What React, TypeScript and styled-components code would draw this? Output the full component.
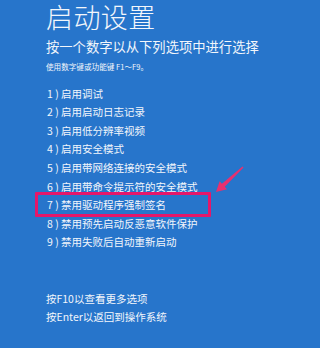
import styled, { createGlobalStyle } from 'styled-components';

const GlobalStyle = createGlobalStyle`
    html, body {
        margin: 0;
        padding: 0;
        background: #2775cb;
    }
    body {
        font-family: "Noto Sans CJK SC", "Noto Sans", sans-serif;
        color: #f2f6fb;
    }
`;

const Screen = styled.main`
    position: relative;
    width: 303px;
    height: 348px;
    overflow: hidden;
    box-sizing: border-box;
    padding: 2px 0 0 46px;
    background: #2775cb;
`;

const Title = styled.h1`
    margin: 0;
    font-size: 27px;
    font-weight: 300;
    line-height: 30px;
    letter-spacing: 0.4px;
`;

const Prompt = styled.h2`
    margin: 6px 0 0;
    font-size: 13.3px;
    font-weight: 400;
    line-height: 18px;
`;

const Hint = styled.p`
    margin: 5px 0 0;
    font-size: 7.6px;
    line-height: 12px;
`;

const OptionList = styled.ol`
    margin: 11.7px 0 0;
    padding: 0;
    list-style: none;
`;

const Option = styled.li<{ $highlighted?: boolean }>`
    position: relative;
    font-size: 10.5px;
    line-height: 18.6px;
    padding-left: 1px;

    ${p => p.$highlighted && `
        &::after {
            content: '';
            position: absolute;
            left: -11px;
            top: -4.5px;
            width: 176px;
            height: 25.5px;
            box-sizing: border-box;
            border: 3.5px solid #e5176a;
            border-radius: 1px;
        }
    `}
`;

const Footer = styled.div`
    margin-top: 37.7px;
    font-size: 10.5px;
    line-height: 18px;
`;

const Arrow = styled.svg`
    position: absolute;
    left: 212px;
    top: 164px;
    width: 36px;
    height: 32px;
`;

const options = [
    '启用调试',
    '启用启动日志记录',
    '启用低分辨率视频',
    '启用安全模式',
    '启用带网络连接的安全模式',
    '启用带命令提示符的安全模式',
    '禁用驱动程序强制签名',
    '禁用预先启动反恶意软件保护',
    '禁用失败后自动重新启动',
];

export default function App() {
    return (
        <>
            <GlobalStyle />
            <Screen>
                <Title>启动设置</Title>
                <Prompt>按一个数字以从下列选项中进行选择</Prompt>
                <Hint>使用数字键或功能键 F1～F9。</Hint>
                <OptionList>
                    {options.map((text, i) => (
                        <Option key={i} $highlighted={i === 6}>
                            {i + 1} ) {text}
                        </Option>
                    ))}
                </OptionList>
                <Footer>
                    <div>按F10以查看更多选项</div>
                    <div>按Enter以返回到操作系统</div>
                </Footer>
                <Arrow viewBox="0 0 36 32">
                    <polygon
                        points="30.5,2.4 9.9,19.7 7.6,17.2 4,28 15,25.2 12.7,22.7 31.5,3.6"
                        fill="#e8306f"
                    />
                </Arrow>
            </Screen>
        </>
    );
}
